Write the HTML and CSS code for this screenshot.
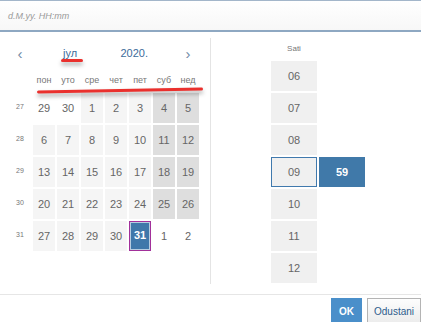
FILE: index.html
```html
<!DOCTYPE html>
<html lang="sr">
<head>
    <meta charset="UTF-8">
    <meta name="viewport" content="width=device-width, initial-scale=1.0">
    <title>Datum i vreme</title>
    <link rel="stylesheet" href="styles.css">
</head>
<body>
    <div class="field">
        <span class="placeholder">d.M.yy. HH:mm</span>
    </div>

    <div class="picker">
        <div class="calendar">
            <div class="cal-head">
                <span class="nav">&lsaquo;</span>
                <span class="month">јул</span>
                <span class="year">2020.</span>
                <span class="nav">&rsaquo;</span>
            </div>
            <div class="weekdays">
                <span></span>
                <span>пон</span><span>уто</span><span>сре</span><span>чет</span><span>пет</span><span>суб</span><span>нед</span>
            </div>
            <div class="days" id="days">
                <!-- filled by script -->
            </div>
        </div>

        <div class="time">
            <div class="time-label">Sati</div>
            <div class="time-label"></div>
            <div class="slot">06</div><div></div>
            <div class="slot">07</div><div></div>
            <div class="slot">08</div><div></div>
            <div class="slot current">09</div><div class="slot picked">59</div>
            <div class="slot">10</div><div></div>
            <div class="slot">11</div><div></div>
            <div class="slot">12</div><div></div>
        </div>
    </div>

    <div class="footer">
        <button class="btn btn-ok">OK</button>
        <button class="btn btn-cancel">Odustani</button>
    </div>

    <!-- red marks drawn over the screenshot -->
    <div class="mark mark-month"></div>
    <div class="mark mark-days"></div>

    <script>
        // Weeks of July 2020, [day, other month?]
        const weeks = [
            { num: 27, days: [[29, 1], [30, 1], [1], [2], [3], [4], [5]] },
            { num: 28, days: [[6], [7], [8], [9], [10], [11], [12]] },
            { num: 29, days: [[13], [14], [15], [16], [17], [18], [19]] },
            { num: 30, days: [[20], [21], [22], [23], [24], [25], [26]] },
            { num: 31, days: [[27], [28], [29], [30], [31], [1, 1], [2, 1]] }
        ];

        const grid = document.getElementById('days');

        weeks.forEach(week => {
            grid.insertAdjacentHTML('beforeend', `<span class="week-num">${week.num}</span>`);
            week.days.forEach((d, i) => {
                let cls = 'day';
                if (d[1]) cls += ' other';
                else if (i >= 5) cls += ' weekend';
                if (!d[1] && d[0] === 31) cls += ' selected';
                grid.insertAdjacentHTML('beforeend', `<span class="${cls}">${d[0]}</span>`);
            });
        });
    </script>
</body>
</html>
```

FILE: styles.css
```css
body {
    margin: 0;
    width: 421px;
    height: 322px;
    overflow: hidden;
    position: relative;
    background: #fff;
    font-family: "Liberation Sans", Arial, sans-serif;
    color: #666;
}

.field {
    height: 29px;
    border-top: 1px solid #a3b6ca;
    border-bottom: 2px solid #8ea8c2;
    background: linear-gradient(#fff, #f7f7f7);
    padding-left: 8px;
    display: flex;
    align-items: center;
}

.placeholder {
    font-size: 9px;
    font-style: italic;
    color: #9a9a9a;
}

.picker {
    display: flex;
    margin-top: 6px;
    height: 246px;
}

.calendar {
    width: 201px;
    padding-left: 9px;
    border-right: 1px solid #e4e4e4;
}

.cal-head {
    display: flex;
    align-items: center;
    height: 30px;
    width: 190px;
    font-size: 11px;
    color: #3d6c9b;
}

.nav {
    width: 22px;
    text-align: center;
    font-size: 15px;
    color: #6f8aa5;
}

.month {
    margin-left: 32px;
}

.year {
    margin-left: auto;
    margin-right: 29px;
}

.weekdays,
.days {
    display: grid;
    grid-template-columns: repeat(8, 22px);
    column-gap: 2px;
}

.weekdays {
    margin-top: 4px;
    height: 16px;
    line-height: 16px;
    font-size: 9px;
    text-align: center;
    color: #777;
}

.days {
    margin-top: 5px;
    grid-auto-rows: 30px;
    row-gap: 2px;
}

.week-num {
    font-size: 7px;
    color: #777;
    text-align: center;
    line-height: 27px;
}

.day {
    background: #f5f5f5;
    font-size: 11px;
    text-align: center;
    line-height: 30px;
    color: #666;
}

.day.weekend {
    background: #dedede;
}

.day.other {
    background: none;
}

.day.selected {
    background: #3f78aa;
    color: #fff;
    font-weight: bold;
    line-height: 26px;
    border: 1px solid #a2309a;
    box-shadow: inset 0 0 0 1px #b6cde0;
}

.time {
    display: grid;
    grid-template-columns: 46px 46px;
    grid-template-rows: 21px;
    grid-auto-rows: 30px;
    gap: 2px;
    padding-left: 60px;
    align-content: start;
}

.time-label {
    line-height: 21px;
    font-size: 8px;
    text-align: center;
    color: #777;
}

.slot {
    background: #f0f0f0;
    font-size: 11px;
    text-align: center;
    line-height: 30px;
    color: #666;
}

.slot.current {
    border: 1px solid #4079ad;
    line-height: 28px;
}

.slot.picked {
    background: #4079a9;
    color: #fff;
    font-weight: bold;
}

.footer {
    margin-top: 10px;
    border-top: 1px solid #e6e6e6;
    padding-top: 3px;
    display: flex;
    justify-content: flex-end;
    gap: 5px;
}

.btn {
    height: 26px;
    font-family: inherit;
    font-size: 10px;
    padding: 0;
    border-radius: 0;
}

.btn-ok {
    width: 31px;
    background: #4a8fca;
    border: 1px solid #4a8fca;
    color: #fff;
    font-weight: bold;
}

.btn-cancel {
    width: 54px;
    background: linear-gradient(#fdfdfd, #ececec);
    border: 1px solid #b4b4b4;
    color: #2d5c8c;
}

.mark {
    position: absolute;
    height: 3px;
    background: #ea302d;
    border-radius: 2px;
    box-shadow: 0 3px 4px rgba(0, 0, 0, 0.35);
}

.mark-month {
    left: 61px;
    top: 59px;
    width: 22px;
}

.mark-days {
    left: 37px;
    top: 89px;
    width: 166px;
    transform: rotate(-1deg);
}
```
